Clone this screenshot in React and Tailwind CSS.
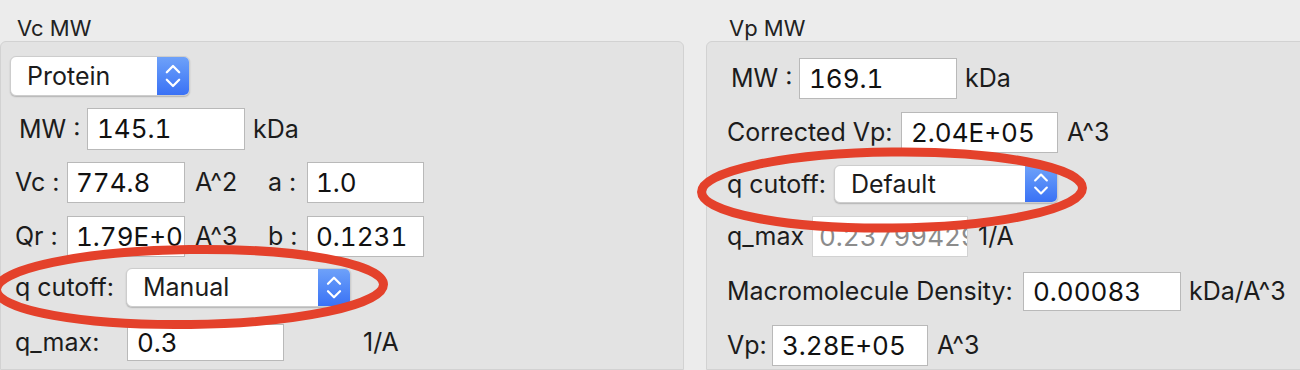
import React from "react";

const FONT = { fontFamily: "Inter, 'Liberation Sans', sans-serif" };

function Field({ w, h = "h-[41px]", value, muted = false, pl = "pl-[9px]" }) {
  return (
    <div
      className={`${w} ${h} ${pl} shrink-0 bg-white border ${
        muted ? "border-[#d2d2d2] text-[#8c8c8c]" : "border-[#b9b9b9] text-[#111]"
      } flex items-center overflow-hidden whitespace-nowrap text-[26px] leading-none tabular-nums`}
    >
      {value}
    </div>
  );
}

function Popup({ w, h, value }) {
  return (
    <div
      className={`${w} ${h} shrink-0 flex rounded-[6px] bg-white border border-[#cdcdcd] shadow-[0_1px_1.5px_rgba(0,0,0,0.22)] overflow-hidden`}
    >
      <div className="flex-1 flex items-center pl-[16px] text-[25px] leading-none text-[#1c1c1c]">
        {value}
      </div>
      <div className="w-[32px] h-full bg-gradient-to-b from-[#6ea1f9] to-[#3a71f5]">
        <svg viewBox="0 0 32 40" className="w-full h-full">
          <path d="M9.5 16 L16 9.5 L22.5 16" fill="none" stroke="white" strokeWidth="2.4" strokeLinecap="round" strokeLinejoin="round" />
          <path d="M9.5 24 L16 30.5 L22.5 24" fill="none" stroke="white" strokeWidth="2.4" strokeLinecap="round" strokeLinejoin="round" />
        </svg>
      </div>
    </div>
  );
}

function Label({ w, children }) {
  return (
    <div className={`${w} shrink-0 text-[25px] leading-none text-[#1c1c1c] whitespace-nowrap`}>{children}</div>
  );
}

function Unit({ ml, children }) {
  return (
    <div className={`${ml} shrink-0 text-[25px] leading-none text-[#1c1c1c] whitespace-nowrap`}>{children}</div>
  );
}

export default function App() {
  return (
    <div style={FONT} className="relative w-[1300px] h-[370px] overflow-hidden bg-[#ececec] flex">
      {/* Left group */}
      <div className="w-[684px] shrink-0 flex flex-col">
        <div className="h-[42px] pt-[17px] pl-[17px] text-[22px] leading-[22px] text-[#222]">Vc MW</div>
        <div className="h-[340px] bg-[#e3e3e3] border border-[#d2d2d2] rounded-t-[6px] flex flex-col">
          <div className="mt-[14px] pl-[9px] flex">
            <Popup w="w-[180px]" h="h-[40px]" value="Protein" />
          </div>
          <div className="mt-[12px] pl-[18px] flex items-center">
            <Label w="w-[68px]">MW :</Label>
            <Field w="w-[158px]" h="h-[42px]" value="145.1" />
            <Unit ml="ml-[8px]">kDa</Unit>
          </div>
          <div className="mt-[12px] pl-[14px] flex items-center">
            <Label w="w-[52px]">Vc :</Label>
            <Field w="w-[118px]" value="774.8" pl="pl-[8px]" />
            <div className="w-[83px] pl-[10px] shrink-0 text-[25px] leading-none text-[#1c1c1c]">A^2</div>
            <Label w="w-[39px]">a :</Label>
            <Field w="w-[117px]" value="1.0" pl="pl-[8px]" />
          </div>
          <div className="mt-[13px] pl-[14px] flex items-center">
            <Label w="w-[52px]">Qr :</Label>
            <Field w="w-[118px]" value="1.79E+05" pl="pl-[8px]" />
            <div className="w-[83px] pl-[10px] shrink-0 text-[25px] leading-none text-[#1c1c1c]">A^3</div>
            <Label w="w-[39px]">b :</Label>
            <Field w="w-[117px]" value="0.1231" pl="pl-[8px]" />
          </div>
          <div className="mt-[11px] pl-[14px] flex items-center">
            <Label w="w-[111px]">q cutoff:</Label>
            <Popup w="w-[225px]" h="h-[39px]" value="Manual" />
          </div>
          <div className="mt-[17px] pl-[14px] flex items-center">
            <Label w="w-[112px]">q_max:</Label>
            <Field w="w-[157px]" h="h-[37px]" value="0.3" />
            <Unit ml="ml-[79px]">1/A</Unit>
          </div>
        </div>
      </div>

      {/* Right group */}
      <div className="ml-[22px] w-[620px] shrink-0 flex flex-col">
        <div className="h-[42px] pt-[17px] pl-[23px] text-[22px] leading-[22px] text-[#222]">Vp MW</div>
        <div className="h-[340px] bg-[#e3e3e3] border border-[#d2d2d2] rounded-t-[6px] flex flex-col">
          <div className="mt-[16px] pl-[24px] flex items-center">
            <Label w="w-[68px]">MW :</Label>
            <Field w="w-[158px]" value="169.1" />
            <Unit ml="ml-[8px]">kDa</Unit>
          </div>
          <div className="mt-[13px] pl-[20px] flex items-center">
            <Label w="w-[174px]">Corrected Vp:</Label>
            <Field w="w-[157px]" value="2.04E+05" />
            <Unit ml="ml-[9px]">A^3</Unit>
          </div>
          <div className="mt-[12px] pl-[20px] flex items-center">
            <Label w="w-[107px]">q cutoff:</Label>
            <Popup w="w-[224px]" h="h-[38px]" value="Default" />
          </div>
          <div className="mt-[13px] pl-[20px] flex items-center">
            <Label w="w-[85px]">q_max</Label>
            <Field w="w-[156px]" value="0.23799429" muted pl="pl-[6px]" />
            <Unit ml="ml-[10px]">1/A</Unit>
          </div>
          <div className="mt-[15px] pl-[20px] flex items-center">
            <Label w="w-[296px]">Macromolecule Density:</Label>
            <Field w="w-[158px]" h="h-[39px]" value="0.00083" />
            <Unit ml="ml-[8px]">kDa/A^3</Unit>
          </div>
          <div className="mt-[14px] pl-[20px] flex items-center">
            <Label w="w-[45px]">Vp:</Label>
            <Field w="w-[156px]" value="3.28E+05" />
            <Unit ml="ml-[9px]">A^3</Unit>
          </div>
        </div>
      </div>

      {/* Annotation ellipses */}
      <svg className="absolute inset-0 pointer-events-none" width="1300" height="370" viewBox="0 0 1300 370">
        <ellipse cx="190" cy="287" rx="193.5" ry="37.5" fill="none" stroke="#e4412b" strokeWidth="9" transform="rotate(-0.8 190 287)" />
        <ellipse cx="892" cy="190" rx="190.5" ry="38" fill="none" stroke="#e4412b" strokeWidth="9" transform="rotate(-0.6 892 190)" />
      </svg>
    </div>
  );
}
